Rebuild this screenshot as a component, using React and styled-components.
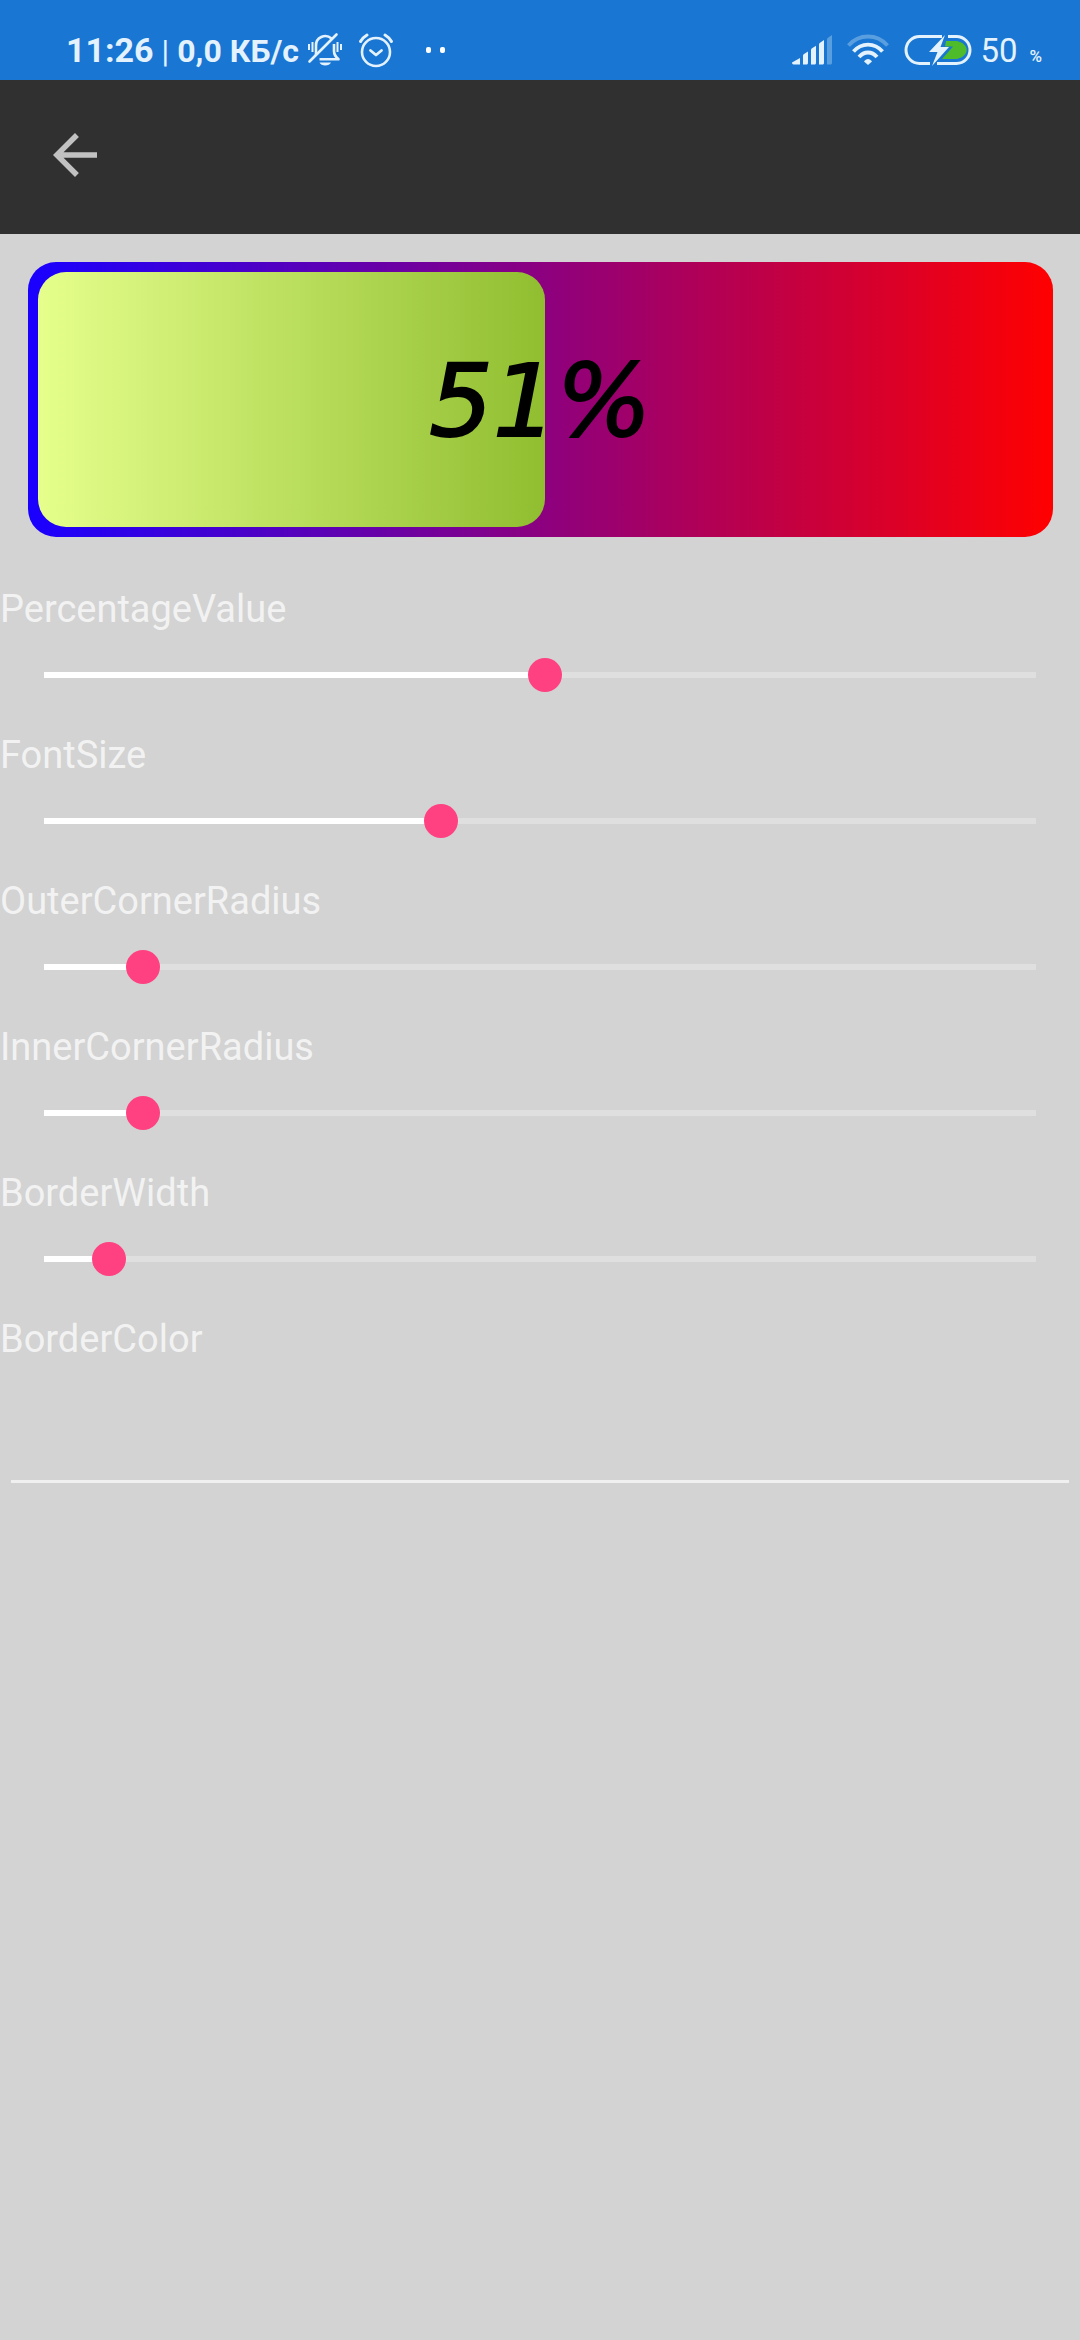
import React, { useState } from "react";
import styled, { createGlobalStyle } from "styled-components";

const GlobalStyle = createGlobalStyle`
  *, *::before, *::after { box-sizing: border-box; }
  body {
    margin: 0;
    background: #d3d3d3;
    font-family: Roboto, "Noto Sans", sans-serif;
  }
`;

const Page = styled.div`
  display: flex;
  flex-direction: column;
  min-height: 100vh;
`;

const StatusBar = styled.div`
  display: flex;
  justify-content: space-between;
  align-items: center;
  height: 80px;
  padding: 20px 38px 0 66px;
  background: #1976d2;
  color: #e3f2fd;
`;

const StatusGroup = styled.div`
  display: flex;
  align-items: center;
  gap: ${(p) => p.$gap}px;
`;

const StatusText = styled.span`
  font-size: ${(p) => p.$size}px;
  font-weight: ${(p) => p.$weight};
  line-height: 1;
`;

const Baseline = styled.div`
  display: flex;
  align-items: baseline;
  gap: ${(p) => p.$gap}px;
`;

const Icon = styled.svg`
  display: block;
  flex: none;
`;

const Toolbar = styled.header`
  display: flex;
  align-items: center;
  height: 154px;
  padding: 0 42px 4px;
  background: #303030;
`;

const BackButton = styled.button`
  display: flex;
  padding: 0;
  border: 0;
  background: none;
  color: #c1c1c1;
  cursor: pointer;
`;

const Meter = styled.div`
  display: grid;
  height: 275px;
  margin: 28px 27px 0 28px;
  padding: ${(p) => p.$border}px;
  border-radius: ${(p) => p.$radius}px;
  background: linear-gradient(90deg, #1900ff, #ff0000);
`;

const MeterFill = styled.div`
  grid-area: 1 / 1;
  background: linear-gradient(90deg, #e6ff8c, #90be30);
`;

const MeterText = styled.div`
  grid-area: 1 / 1;
  place-self: center;
  padding-top: 4px;
  color: #000;
  font-family: "DejaVu Sans", sans-serif;
  font-style: italic;
  line-height: 120px;
  -webkit-text-stroke: 2px #000;
`;

const Settings = styled.form`
  display: flex;
  flex-direction: column;
  margin-top: 46px;
`;

const Field = styled.div`
  display: flex;
  flex-direction: column;
`;

const Label = styled.label`
  color: #f2f2f2;
  font-size: 38px;
  line-height: 52px;
`;

const Slider = styled.input`
  appearance: none;
  height: 50px;
  margin: 15px 27px 29px;
  border: 0;
  outline: 0;
  background: linear-gradient(
      90deg,
      #fff var(--filled),
      #dfdfdf var(--filled)
    )
    center / calc(100% - 34px) 6px no-repeat;
  cursor: pointer;

  &::-webkit-slider-thumb {
    appearance: none;
    width: 34px;
    height: 34px;
    border-radius: 50%;
    background: #ff4081;
  }
`;

const ColorInput = styled.input`
  height: 118px;
  margin: 0 11px;
  padding: 0;
  border: 0;
  border-bottom: 3px solid #f0f0f0;
  outline: 0;
  background: none;
  color: #f2f2f2;
  font: 38px Roboto, sans-serif;
`;

const BellOffIcon = () => (
  <Icon width="36" height="36" viewBox="0 0 36 36" fill="none" stroke="currentColor" strokeWidth="2.6">
    <path d="M9 23V14a9.300 9.300 0 0 1 15.500-7.500M27 12v7c0 4 1.500 5.500 4.500 8.300H12.500" strokeLinejoin="round" />
    <path d="M2.500 29.500 29.500 2.500" strokeLinecap="round" />
    <path d="M12.500 30.500h11.500c-1.500 4-10 4-11.500 0Z" fill="currentColor" stroke="none" />
    <path d="M2 12v6M5.500 10v10M30.500 10v10M34 12v6" strokeWidth="2" />
  </Icon>
);

const AlarmIcon = () => (
  <Icon width="36" height="36" viewBox="0 0 36 36" fill="none" stroke="currentColor" strokeLinecap="round" strokeLinejoin="round">
    <circle cx="18" cy="20" r="14" strokeWidth="2.600" />
    <path d="m12.500 18.500 5.500 4.500 5.500-4.500" strokeWidth="2.800" />
    <path d="M2.500 9.500c1.500-3 4-5 6.500-6.500M33.500 9.500c-1.500-3-4-5-6.500-6.500" strokeWidth="3" />
  </Icon>
);

const DotsIcon = () => (
  <Icon width="20" height="6" viewBox="0 0 20 6" fill="#fff">
    <rect width="5" height="6" rx="2" />
    <rect x="14" width="5" height="6" rx="2" />
  </Icon>
);

const SignalIcon = () => (
  <Icon width="40" height="30" viewBox="0 0 40 30" fill="currentColor">
    <path d="M0 27.500 8 23v6.500H1.500Q0 29.500 0 27.500Z" />
    <path d="M11 20.500q0-1 1-1.600l4-2.400v11q0 2-1 2h-4ZM19 15q0-1 1-1.700l4-2.600v17q0 1.800-1 1.800h-4ZM27 9.500q0-1 1-1.800l4-2.700v22.700q0 1.800-1 1.800h-4Z" />
    <path d="M35 4.500q0-1 1-1.700L40 0v27.700q0 1.800-1 1.800h-4Z" opacity=".32" />
  </Icon>
);

const WifiIcon = () => (
  <Icon width="42" height="32" viewBox="0 0 42 32" fill="none" stroke="currentColor" strokeWidth="3.800">
    <path d="M1.500 11.500C12-.5 30-.5 40.500 11.500" opacity=".32" />
    <path d="M6.500 17.500c8-9.300 21-9.300 29 0" />
    <path d="M12 23c5-6 13-6 18 0" />
    <path d="m21 31-4-3.500c2-3.500 6-3.500 8 0Z" fill="currentColor" stroke="none" />
  </Icon>
);

const BatteryIcon = () => (
  <Icon width="68" height="32" viewBox="0 0 68 32" fill="none">
    <path d="M38 2.500H15.500a13.500 13.500 0 0 0 0 27H26M44 2.500h8.500a13.500 13.500 0 0 1 0 27H33" stroke="currentColor" strokeWidth="3" />
    <path d="M42 7h11c13 3 13 15 0 18H38l11-12.500h-8Z" fill="#4dbb2a" />
    <path d="M41 1 25 18h8.500L28 32l17-19h-8.500Z" fill="currentColor" />
  </Icon>
);

const BackIcon = () => (
  <Icon width="66" height="66" viewBox="0 0 24 24" fill="currentColor">
    <path d="M20 11H7.830l5.590-5.590L12 4l-8 8 8 8 1.410-1.410L7.830 13H20v-2z" />
  </Icon>
);

const sliders = [
  { id: "percentage", label: "PercentageValue", max: 101 },
  { id: "fontSize", label: "FontSize", max: 250 },
  { id: "outerRadius", label: "OuterCornerRadius", max: 280 },
  { id: "innerRadius", label: "InnerCornerRadius", max: 280 },
  { id: "border", label: "BorderWidth", max: 152 },
];

export default function App() {
  const [values, setValues] = useState({
    percentage: 51,
    fontSize: 100,
    outerRadius: 28,
    innerRadius: 28,
    border: 10,
  });

  const change = (id) => (event) =>
    setValues({ ...values, [id]: Number(event.target.value) });

  return (
    <Page>
      <GlobalStyle />
      <StatusBar>
        <StatusGroup $gap={32}>
          <StatusGroup $gap={8}>
            <Baseline $gap={8}>
              <StatusText $size={34} $weight={700}>11:26</StatusText>
              <StatusText $size={31} $weight={400}>|</StatusText>
              <StatusText $size={32} $weight={700}>0,0 КБ/с</StatusText>
            </Baseline>
            <StatusGroup $gap={15}>
              <BellOffIcon />
              <AlarmIcon />
            </StatusGroup>
          </StatusGroup>
          <DotsIcon />
        </StatusGroup>
        <StatusGroup $gap={15}>
          <SignalIcon />
          <WifiIcon />
          <StatusGroup $gap={8}>
            <BatteryIcon />
            <Baseline $gap={12}>
              <StatusText $size={33} $weight={400}>50</StatusText>
              <StatusText $size={17} $weight={500}>%</StatusText>
            </Baseline>
          </StatusGroup>
        </StatusGroup>
      </StatusBar>

      <Toolbar>
        <BackButton type="button" aria-label="Back">
          <BackIcon />
        </BackButton>
      </Toolbar>

      <Meter $border={values.border} $radius={values.outerRadius}>
        <MeterFill
          style={{
            width: `${(values.percentage / 101) * 100}%`,
            borderRadius: values.innerRadius,
          }}
        />
        <MeterText style={{ fontSize: values.fontSize }}>
          {values.percentage}%
        </MeterText>
      </Meter>

      <Settings>
        {sliders.map(({ id, label, max }) => (
          <Field key={id}>
            <Label htmlFor={id}>{label}</Label>
            <Slider
              id={id}
              type="range"
              min="0"
              max={max}
              value={values[id]}
              onChange={change(id)}
              style={{ "--filled": `${(values[id] / max) * 100}%` }}
            />
          </Field>
        ))}
        <Field>
          <Label htmlFor="borderColor">BorderColor</Label>
          <ColorInput id="borderColor" type="text" />
        </Field>
      </Settings>
    </Page>
  );
}
